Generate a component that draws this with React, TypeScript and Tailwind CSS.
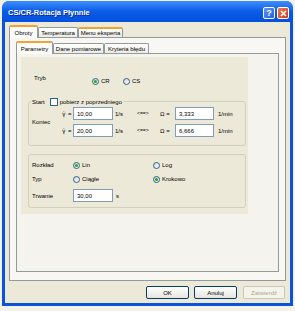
import React from "react";

const font = "font-['Liberation_Sans',Arial,sans-serif]";

function Radio({ checked, label }: { checked?: boolean; label: string }) {
  return (
    <span className="flex items-center">
      <span className="flex h-[7px] w-[7px] items-center justify-center rounded-full border border-[#2c628b] bg-gradient-to-br from-[#d4d4cc] to-white">
        {checked && <span className="h-[3px] w-[3px] rounded-full bg-[#23a623]" />}
      </span>
      <span className="ml-[2px]">{label}</span>
    </span>
  );
}

function Field({ value, w }: { value: string; w: string }) {
  return (
    <div className={`${w} flex h-[13px] items-center border border-[#7f9db9] bg-white pl-[3px]`}>
      {value}
    </div>
  );
}

function Tab({
  label,
  w,
  active,
  hot,
}: {
  label: string;
  w: string;
  active?: boolean;
  hot?: boolean;
}) {
  if (active) {
    return (
      <div
        className={`${w} relative z-10 -mb-[1px] flex h-[13px] items-center justify-center rounded-t-[2px] border-x border-t-2 border-x-[#919b9c] border-t-[#f2a231] bg-[#fcfcfb]`}
      >
        {label}
      </div>
    );
  }
  return (
    <div
      className={`${w} flex h-[10px] items-center justify-center rounded-t-[2px] border-x border-t border-x-[#919b9c] bg-gradient-to-b from-white to-[#ecebe5] ${
        hot ? "border-t-2 border-t-[#f2a231]" : "border-t-[#919b9c]"
      }`}
    >
      {label}
    </div>
  );
}

function Button({ label, w, disabled }: { label: string; w: string; disabled?: boolean }) {
  return (
    <div
      className={`${w} flex h-[13px] items-center justify-center rounded-[2px] border ${
        disabled
          ? "border-[#c9c7ba] bg-[#f5f4ea] text-[#aca899]"
          : "border-[#003c74] bg-gradient-to-b from-white to-[#e6e5de]"
      }`}
    >
      {label}
    </div>
  );
}

export default function App() {
  return (
    <div className={`${font} h-[311px] w-[295px] overflow-hidden bg-[#f2f1ea] pl-[2px] pt-[1px] text-[6px] leading-none text-black`}>
      <div className="flex h-[305px] w-[291px] flex-col overflow-hidden rounded-t-[7px] bg-[#0b52df]">
        {/* title bar */}
        <div className="flex h-[21px] items-center bg-gradient-to-b from-[#3c8eff] via-[#0a5be6] to-[#0450dc] pl-[6px] pr-[4px] pt-[3px]">
          <span className="flex-1 text-[7.5px] font-bold text-white [text-shadow:1px_1px_0_#0a2d8a]">
            CS/CR-Rotacja Płynnie
          </span>
          <div className="flex h-[12px] w-[12px] items-center justify-center rounded-[2px] border border-white bg-gradient-to-br from-[#5b95f5] to-[#2661d8] text-[9px] font-bold text-white">
            ?
          </div>
          <div className="ml-[2px] flex h-[12px] w-[12px] items-center justify-center rounded-[2px] border border-white bg-gradient-to-br from-[#ee7a55] to-[#cc3a16]">
            <svg width="7" height="7" viewBox="0 0 7 7">
              <path d="M1 1L6 6M6 1L1 6" stroke="white" strokeWidth="1.6" />
            </svg>
          </div>
        </div>

        {/* body */}
        <div className="mx-[3px] mb-[3px] flex flex-1 flex-col bg-[#ece9d8] pl-[4px] pt-[3px]">
          <div className="flex h-[12px] items-end">
            <Tab label="Obroty" w="w-[29px]" active />
            <Tab label="Temperatura" w="w-[40px]" />
            <Tab label="Menu eksperta" w="w-[45px]" hot />
          </div>

          <div className="h-[244px] w-[277px] border border-[#919b9c] bg-[#f8f7f3] pl-[6px] pt-[3px]">
            <div className="flex h-[12px] items-end">
              <Tab label="Parametry" w="w-[37px]" active />
              <Tab label="Dane pomiarowe" w="w-[51px]" />
              <Tab label="Kryteria błędu" w="w-[45px]" />
            </div>

            <div className="h-[219px] w-[263px] border border-[#919b9c] bg-[#f4f3ee] pl-[4px] pt-[3px]">
              <div className="flex h-[157px] w-[227px] flex-col bg-[#ece9d8]">
                {/* Tryb */}
                <div className="mt-[19px] flex h-[10px] items-center">
                  <span className="mb-[6px] w-[71px] pl-[13px]">Tryb</span>
                  <span className="w-[31px]">
                    <Radio checked label="CR" />
                  </span>
                  <Radio label="CS" />
                </div>

                {/* Start / Koniec */}
                <div className="ml-[7px] mt-[15px] flex h-[45px] w-[218px] flex-col rounded-[3px] border border-[#d0d0bf]">
                  <div className="-mt-[5px] flex h-[9px] items-center pl-[2px]">
                    <span className="flex h-[9px] items-center bg-[#ece9d8] px-[1px]">
                      <span>Start</span>
                      <span className="ml-[5px] h-[8px] w-[8px] border border-[#2c628b] bg-white" />
                      <span className="ml-[2px] pr-[1px]">pobierz z poprzedniego</span>
                    </span>
                  </div>
                  <div className="mt-[1px] flex items-center">
                    <span className="w-[33px] pl-[3px]">Koniec</span>
                    <div className="flex flex-col gap-[4px]">
                      {[
                        ["10,00", "3,333"],
                        ["20,00", "6,666"],
                      ].map(([a, b]) => (
                        <div key={a} className="flex h-[13px] items-center">
                          <span className="w-[6px] font-['DejaVu_Sans',sans-serif]">γ̇</span>
                          <span className="w-[5px]">=</span>
                          <Field value={a} w="w-[40px]" />
                          <span className="ml-[2px] w-[22px]">1/s</span>
                          <span className="w-[23px] text-[5px]">{"<==>"}</span>
                          <span className="w-[15px]">Ω =</span>
                          <Field value={b} w="w-[39px]" />
                          <span className="ml-[4px]">1/min</span>
                        </div>
                      ))}
                    </div>
                  </div>
                </div>

                {/* Rozkład / Typ / Trwanie */}
                <div className="ml-[7px] mt-[8px] flex h-[54px] w-[218px] flex-col rounded-[3px] border border-[#d0d0bf] pt-[5px]">
                  <div className="flex h-[10px] items-center">
                    <span className="w-[44px] pl-[3px]">Rozkład</span>
                    <span className="w-[80px]">
                      <Radio checked label="Lin" />
                    </span>
                    <Radio label="Log" />
                  </div>
                  <div className="mt-[4px] flex h-[10px] items-center">
                    <span className="w-[44px] pl-[3px]">Typ</span>
                    <span className="w-[80px]">
                      <Radio label="Ciągłe" />
                    </span>
                    <Radio checked label="Krokowo" />
                  </div>
                  <div className="mt-[5px] flex h-[13px] items-center">
                    <span className="w-[44px] pl-[3px]">Trwanie</span>
                    <Field value="30,00" w="w-[40px]" />
                    <span className="ml-[3px]">s</span>
                  </div>
                </div>
              </div>
            </div>
          </div>

          {/* buttons */}
          <div className="mt-[5px] flex justify-end pr-[5px]">
            <Button label="OK" w="w-[43px]" />
            <span className="w-[5px]" />
            <Button label="Anuluj" w="w-[43px]" />
            <span className="w-[6px]" />
            <Button label="Zatwierdź" w="w-[42px]" disabled />
          </div>
        </div>
      </div>
    </div>
  );
}
